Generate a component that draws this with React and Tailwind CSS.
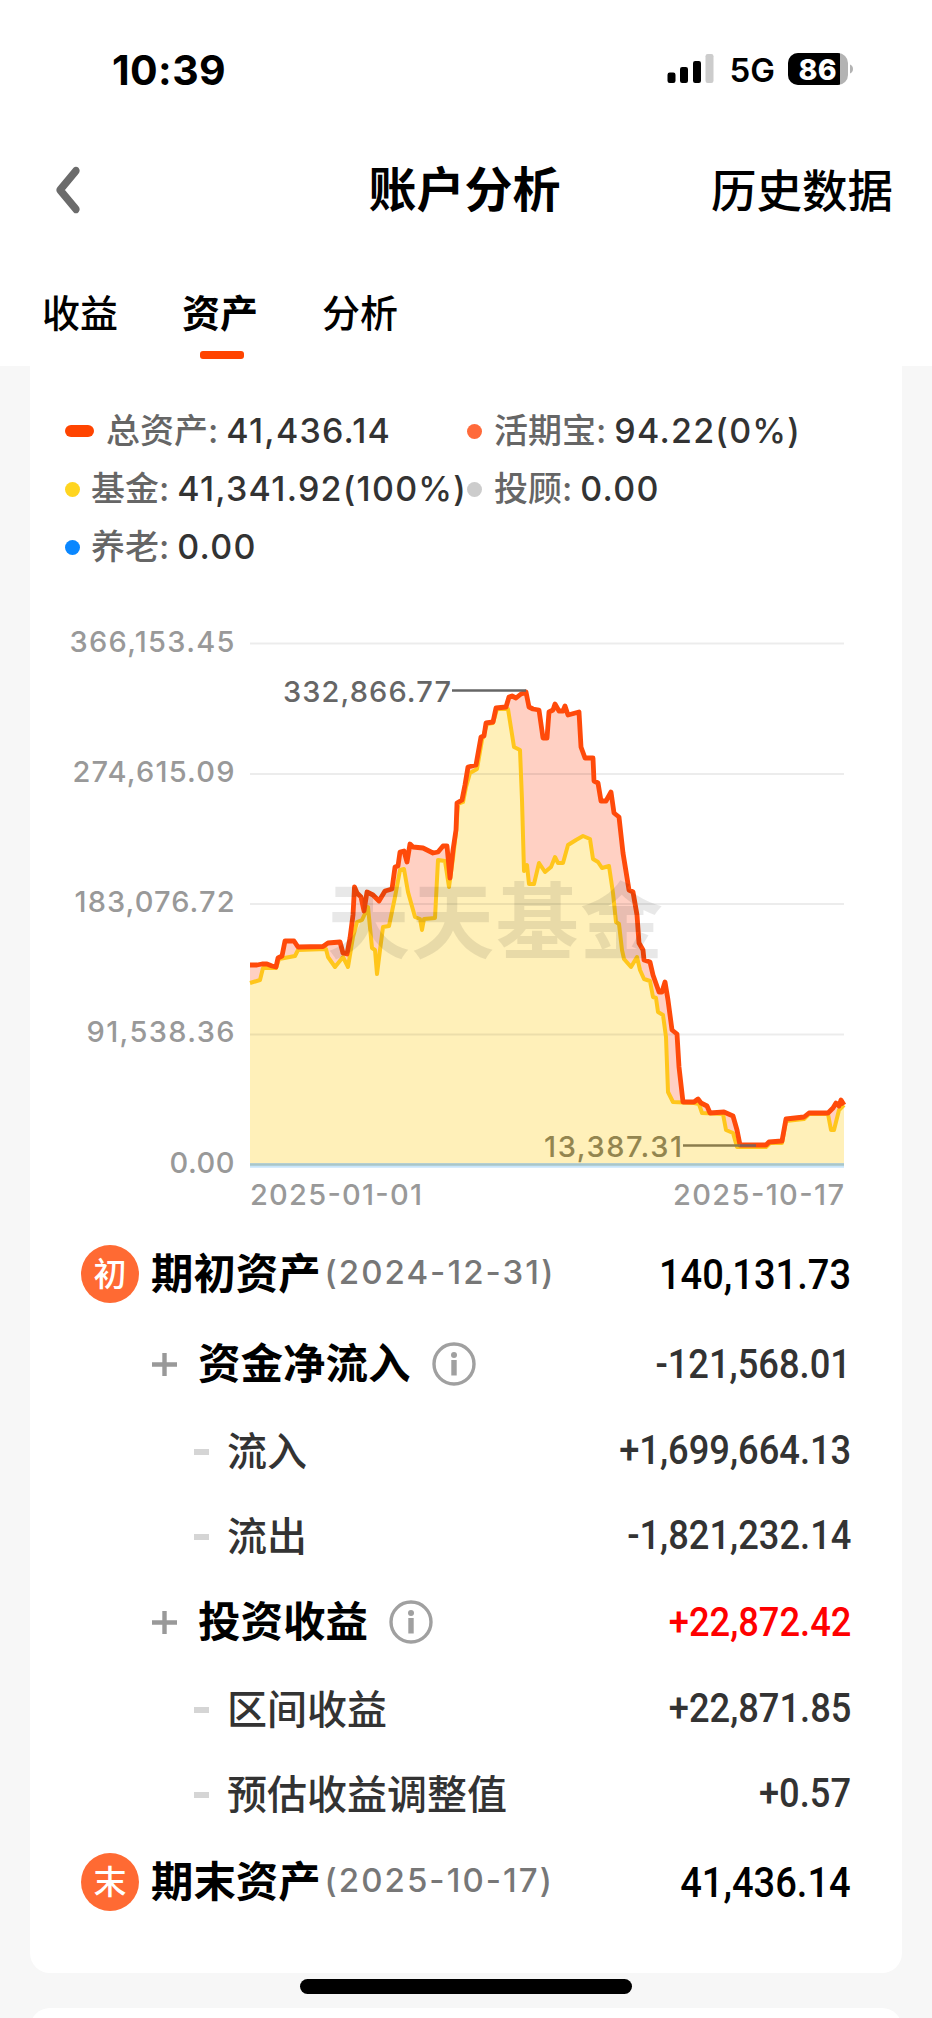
import { ChevronLeft } from "lucide-react";

const tabs = [
  { label: "收益", active: false },
  { label: "资产", active: true },
  { label: "分析", active: false },
];

const legend = [
  { label: "总资产", value: "41,436.14", marker: "w-[29px] h-3 bg-[#ff4400] mr-3" },
  { label: "活期宝", value: "94.22(0%)", marker: "w-[15px] h-[15px] bg-[#ff6a3a] mr-3" },
  { label: "基金", value: "41,341.92(100%)", marker: "w-[15px] h-[15px] bg-[#ffd520] mr-[11px]" },
  { label: "投顾", value: "0.00", marker: "w-[15px] h-[15px] bg-[#cccccc] mr-3" },
  { label: "养老", value: "0.00", marker: "w-[15px] h-[15px] bg-[#0a87ff] mr-[11px]" },
];

const totalPoints =
  "250,965 257,965 262,964 267,964 272,966 276,967 278,958 282,956 285,941 294,941 298,947 323,946.5 328,943 340,942 343,953 347,954 350,938 353,915 354.5,887 357,893 361,897 364,911 367,892 373,895 379,901 385,891 392,889 395,867 398,866 400,852 404,851 407,862 410,844 413,847 423,848 427,850 433,853 438,852 443,846 447,846 450,878 453,850 456,830 457,803 462,800 465,785 468,767 476,765 481,737 484,736 486,723 493,722 496,708 506,707 509,697 512,696 516,698 521,694 526,692 529,707 533,709 539,710 543,738 547,738 549,712 553,710 555,704 559,711 563,711 565,706 568,715 579,712 581,747 585,758 593,758 594,781 598,783 601,801 606,801 611,792 614,813 619,817 623,853 629,890 633,892 637,915 639,943 643,950 644,960 650,962 653,975 659,992 662,992 665,982 668,1000 672,1030 677,1034 679,1067 683,1102 694,1102 698,1099 701,1103 707,1106 710,1113 724,1112 733,1116 737,1130 740,1145 766,1145 769,1142 782,1141 786,1119 804,1117 809,1113 828,1113 833,1108 836,1103 839,1106 841,1100 844,1105";

const fundPoints =
  "250,983 260,980 263,968 276,968 279,959 295,956 298,950 326,949 328,957 335,967 343,957 348,967 353,937 357,922 362,920 368,907 372,948 375,950 377,974 380,950 383,927 389,926 395,897 400,870 404,869 408,892 415,917 420,919 422,930 424,919 435,918 438,860 445,861 449,887 453,858 456,832 458,804 463,802 466,787 470,773 477,769 482,740 487,724 493,723 497,709 508,709 514,747 520,750 522,800 524,871 527,865 529,884 534,884 539,863 545,872 551,867 555,857 558,863 563,863 568,845 576,840 583,836 590,839 593,859 598,862 602,868 609,866 613,893 616,922 619,924 622,950 624,959 631,967 637,957 640,970 644,979 650,981 653,997 656,998 658,1012 663,1015 666,1037 668,1092 673,1102 694,1103 699,1104 702,1113 723,1114 726,1130 733,1133 737,1147 766,1147 770,1143 782,1143 786,1121 804,1119 809,1114 828,1114 831,1130 834,1130 839,1110 844,1105";

const axisLabels = [
  { text: "366,153.45", y: 651.5, w: 165 },
  { text: "274,615.09", y: 781.5, w: 162 },
  { text: "183,076.72", y: 911.5, w: 160 },
  { text: "91,538.36", y: 1042, w: 148 },
  { text: "0.00", y: 1172.5, w: 65 },
];

function StatusBar() {
  return (
    <div className="flex h-[140px] items-center justify-between pl-[112px] pr-[78px] text-black">
      <span className="text-[41px] font-bold leading-none tracking-[0.4px]">10:39</span>
      <div className="flex items-center">
        <svg width="48" height="32" viewBox="0 0 48 32" className="mr-[15px]">
          <rect x="0.5" y="18.5" width="8" height="10.5" rx="2.2" />
          <rect x="13" y="13" width="8" height="16" rx="2.2" />
          <rect x="26" y="7" width="8" height="22" rx="2.2" />
          <rect x="38.5" y="0" width="8" height="29" rx="2.2" fill="#cccccc" />
        </svg>
        <span className="mr-[13px] text-[33px] font-semibold leading-none">5G</span>
        <svg width="66" height="32" viewBox="0 0 66 32" className="-mt-0.5">
          <defs>
            <clipPath id="batteryBody">
              <rect width="60" height="32" rx="10" />
            </clipPath>
          </defs>
          <g clipPath="url(#batteryBody)">
            <rect width="60" height="32" fill="#b3b3b3" />
            <rect width="52" height="32" fill="#000" />
          </g>
          <path d="M62 11.5c4 1 4 8 0 9z" fill="#b3b3b3" />
          <text x="10.5" y="26.5" fill="#fff" fontSize="28.5" fontWeight="800" textLength="38">
            86
          </text>
        </svg>
      </div>
    </div>
  );
}

function AssetChart() {
  return (
    <svg width="872" height="600" viewBox="30 620 872 600" className="block">
      <polygon points={`250,1164 ${totalPoints} 844,1164`} fill="#ffd0c3" />
      <polygon points={`250,1164 ${fundPoints} 844,1164`} fill="#fff0b9" />
      <g stroke="#000" strokeOpacity="0.075" strokeWidth="2">
        <path d="M250 643.5H844M250 774H844M250 904H844M250 1034.5H844" />
      </g>
      <g fill="none" strokeLinejoin="round">
        <polyline points={fundPoints} stroke="#ffc61c" strokeWidth="4" />
        <polyline points={totalPoints} stroke="#ff4a0a" strokeWidth="4.8" />
      </g>
      <text
        x="327"
        y="951.5"
        fontSize="83"
        fontWeight="700"
        fill="#000"
        fillOpacity="0.09"
        textLength="336"
      >
        天天基金
      </text>
      <path d="M250 1165.5H844" stroke="#c9e6fb" strokeWidth="4.5" />
      <path d="M250 1164.5H844" stroke="#a9c6c8" strokeWidth="2.5" />
      <g fontSize="29" fontWeight="500" fill="#999999">
        {axisLabels.map((l) => (
          <text key={l.text} x={234.5 - l.w} y={l.y} textLength={l.w}>
            {l.text}
          </text>
        ))}
        <text x="250" y="1204.5" textLength="172">2025-01-01</text>
        <text x="673" y="1204.5" textLength="171">2025-10-17</text>
        <text x="283" y="701.5" textLength="168" fill="#666666">332,866.77</text>
        <text x="544" y="1156.5" textLength="138" fill="#93854f">13,387.31</text>
      </g>
      <path d="M452 690.5H526" stroke="#666666" strokeWidth="2.5" />
      <path d="M683 1145.5H740" stroke="#8b7d4c" strokeWidth="2.5" />
      <path d="M740 1145.5H756" stroke="#80605a" strokeWidth="2.5" />
    </svg>
  );
}

function InfoIcon() {
  return (
    <svg width="44" height="44" viewBox="0 0 44 44" className="ml-[21px]">
      <circle cx="22" cy="22" r="20" fill="none" stroke="#a0a0a0" strokeWidth="3.4" />
      <circle cx="22" cy="13" r="3" fill="#a0a0a0" />
      <path d="M22 18V33.5" stroke="#a0a0a0" strokeWidth="5.4" />
    </svg>
  );
}

function Value({ children, className = "text-[41px] text-[#333333]" }) {
  return (
    <span
      className={`ml-auto origin-right scale-x-[0.885] font-['Roboto',sans-serif] font-medium leading-none ${className}`}
    >
      {children}
    </span>
  );
}

function TotalRow({ badge, title, date, value }) {
  return (
    <div className="flex h-[92px] items-center pl-[51px]">
      <span className="flex h-[58px] w-[58px] items-center justify-center rounded-full bg-[#ff6a33] text-[33px] font-medium leading-none text-white">
        {badge}
      </span>
      <span className="ml-3 text-[42.4px] font-bold leading-none text-black">{title}</span>
      <span className="-mt-1 ml-1 text-[33px] font-medium leading-none tracking-[2.05px] text-[#777777]">
        ({date})
      </span>
      <Value className="text-[43px] text-black">{value}</Value>
    </div>
  );
}

function GroupRow({ title, value, className }) {
  return (
    <div className="flex h-[88px] items-center pl-[122px]">
      <svg width="25" height="25" viewBox="0 0 25 25" className="mr-[21px]">
        <path d="M12.5 1V24M0 12.5H25" stroke="#999999" strokeWidth="4.4" />
      </svg>
      <span className="text-[42.5px] font-bold leading-none text-black">{title}</span>
      <InfoIcon />
      <Value className={className}>{value}</Value>
    </div>
  );
}

function DetailRow({ title, value }) {
  return (
    <div className="flex h-[85px] items-center pl-[164px]">
      <span className="mr-[18px] mt-0.5 h-[6px] w-[15px] bg-[#d5d5d5]" />
      <span className="mt-0.5 text-[40px] font-medium leading-none text-[#333333]">{title}</span>
      <Value>{value}</Value>
    </div>
  );
}

export default function App() {
  return (
    <div className="relative h-[2018px] w-[932px] overflow-hidden bg-[#f7f7f7] font-['Inter','Noto_Sans_CJK_SC',sans-serif]">
      <header className="h-[366px] bg-white">
        <StatusBar />
        <div className="grid h-[100px] grid-cols-[1fr_auto_1fr] items-center pl-[36px] pr-[39px] text-black">
          <ChevronLeft className="h-[64px] w-[64px] scale-y-[1.2] text-[#6b6b6b]" strokeWidth={2.6} />
          <h1 className="text-[48px] font-bold leading-none">账户分析</h1>
          <span className="mt-1 text-right text-[45.5px] font-medium leading-none">历史数据</span>
        </div>
        <nav className="flex gap-16 pl-[42px] pt-[53px]">
          {tabs.map((tab) => (
            <div key={tab.label} className="flex flex-col items-center text-[38px] leading-[40px] text-black">
              <span className={tab.active ? "font-bold" : "font-medium"}>{tab.label}</span>
              {tab.active && <span className="ml-1 mt-[18px] h-2 w-11 rounded-[3px] bg-[#ff4400]" />}
            </div>
          ))}
        </nav>
      </header>

      <main className="mx-[30px] h-[1607px] rounded-b-[20px] bg-white">
        <div className="grid grid-cols-[402px_auto] pl-[35px] pt-9">
          {legend.map((item) => (
            <div key={item.label} className="flex h-[58px] items-center whitespace-nowrap text-[34px] leading-none">
              <span className={`shrink-0 rounded-full ${item.marker}`} />
              <span className="font-medium text-[#666666]">{item.label}:</span>
              <span className="ml-2 font-medium tracking-[1.25px] text-[#333333]">{item.value}</span>
            </div>
          ))}
        </div>
        <div className="pt-11">
          <AssetChart />
        </div>
        <div className="pr-[51px] pt-2">
          <TotalRow badge="初" title="期初资产" date="2024-12-31" value="140,131.73" />
          <GroupRow title="资金净流入" value="-121,568.01" />
          <DetailRow title="流入" value="+1,699,664.13" />
          <DetailRow title="流出" value="-1,821,232.14" />
          <GroupRow title="投资收益" value="+22,872.42" className="text-[41px] text-[#ff0000]" />
          <DetailRow title="区间收益" value="+22,871.85" />
          <DetailRow title="预估收益调整值" value="+0.57" />
          <TotalRow badge="末" title="期末资产" date="2025-10-17" value="41,436.14" />
        </div>
      </main>

      <div className="mx-[30px] mt-[35px] h-10 rounded-t-[20px] bg-white" />
      <div className="absolute bottom-6 left-[300px] h-[15px] w-[332px] rounded-full bg-black" />
    </div>
  );
}
